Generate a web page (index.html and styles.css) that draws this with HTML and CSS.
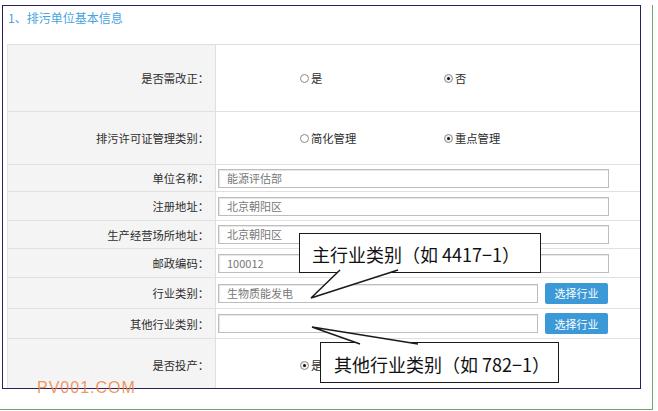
FILE: index.html
```html
<!DOCTYPE html>
<html lang="zh-CN">
<head>
    <meta charset="UTF-8">
    <meta name="viewport" content="width=device-width, initial-scale=1.0">
    <title>排污单位基本信息</title>
    <link rel="stylesheet" href="styles.css">
</head>
<body>
    <div class="page">
        <div class="panel">
            <div class="panel-title">1、排污单位基本信息</div>
            <div class="form-table">
                <div class="row row-1">
                    <div class="label">是否需改正：</div>
                    <div class="value radios">
                        <span class="opt"><span class="radio"></span>是</span>
                        <span class="opt"><span class="radio checked"></span>否</span>
                    </div>
                </div>
                <div class="row row-2">
                    <div class="label">排污许可证管理类别：</div>
                    <div class="value radios">
                        <span class="opt"><span class="radio"></span>简化管理</span>
                        <span class="opt"><span class="radio checked"></span>重点管理</span>
                    </div>
                </div>
                <div class="row row-3">
                    <div class="label">单位名称：</div>
                    <div class="value"><div class="field">能源评估部</div></div>
                </div>
                <div class="row row-4">
                    <div class="label">注册地址：</div>
                    <div class="value"><div class="field">北京朝阳区</div></div>
                </div>
                <div class="row row-5">
                    <div class="label">生产经营场所地址：</div>
                    <div class="value"><div class="field">北京朝阳区</div></div>
                </div>
                <div class="row row-6">
                    <div class="label">邮政编码：</div>
                    <div class="value"><div class="field">100012</div></div>
                </div>
                <div class="row row-7">
                    <div class="label">行业类别：</div>
                    <div class="value">
                        <div class="field field-short">生物质能发电</div>
                        <button class="pick-btn">选择行业</button>
                    </div>
                </div>
                <div class="row row-8">
                    <div class="label">其他行业类别：</div>
                    <div class="value">
                        <div class="field field-short"></div>
                        <button class="pick-btn">选择行业</button>
                    </div>
                </div>
                <div class="row row-9">
                    <div class="label">是否投产：</div>
                    <div class="value radios">
                        <span class="opt"><span class="radio checked"></span>是</span>
                    </div>
                </div>
            </div>
        </div>

        <!-- annotation callouts drawn over the form -->
        <div class="callout callout-main">主行业类别（如 4417−1）</div>
        <div class="callout callout-other">其他行业类别（如 782−1）</div>
        <svg class="tails" width="658" height="411" viewBox="0 0 658 411">
            <polyline points="340,265 311,293 398,265" />
            <polyline points="360,339 312,322 418,339" />
        </svg>
        <div class="watermark">PV001.COM</div>
    </div>
</body>
</html>
```

FILE: styles.css
```css
body {
    margin: 0;
    padding: 0;
    background-color: #fff;
    font-family: "Noto Sans CJK SC", "Liberation Sans", sans-serif;
}

.page {
    position: relative;
    width: 653px;
    height: 405px;
    box-sizing: border-box;
    border-right: 1px solid #6aa871;
    border-bottom: 1px solid #6aa871;
}

.panel {
    margin: 5px 0 0 2px;
    width: 639px;
    height: 384px;
    box-sizing: border-box;
    border: 1px solid #27215f;
    overflow: hidden;
}

.panel-title {
    height: 38px;
    box-sizing: border-box;
    padding: 5px 0 0 5px;
    font-size: 12px;
    line-height: 13px;
    color: #46a4df;
}

.form-table {
    margin-left: 4px;
    border-top: 1px solid #dedede;
    border-left: 1px solid #e4e4e4;
}

.row {
    display: flex;
    box-sizing: border-box;
    border-bottom: 1px solid #e0e0e0;
}

.row-1 { height: 67px; }
.row-2 { height: 53px; }
.row-3 { height: 27px; }
.row-4 { height: 29px; }
.row-5 { height: 28px; }
.row-6 { height: 29px; }
.row-7 { height: 31px; }
.row-8 { height: 30px; }
.row-9 { height: 53px; }

.label {
    width: 208px;
    box-sizing: border-box;
    padding-right: 6px;
    background-color: #f4f4f4;
    border-right: 1px solid #e0e0e0;
    display: flex;
    align-items: center;
    justify-content: flex-end;
    font-size: 11.3px;
    color: #2e2e2e;
}

.value {
    flex: 1;
    display: flex;
    align-items: center;
    padding-left: 2px;
}

.radios {
    padding-left: 84px;
    font-size: 11.3px;
    color: #2e2e2e;
}

.opt {
    width: 144px;
    display: flex;
    align-items: center;
}

.radio {
    width: 9px;
    height: 9px;
    box-sizing: border-box;
    border: 1px solid #8a8a8a;
    border-radius: 50%;
    margin-right: 2px;
    background-color: #fff;
    position: relative;
}

.radio.checked {
    background-color: #eee;
}

.radio.checked::after {
    content: "";
    position: absolute;
    left: 2px;
    top: 2px;
    width: 3px;
    height: 3px;
    border-radius: 50%;
    background-color: #111;
}

.field {
    width: 391px;
    height: 19px;
    box-sizing: border-box;
    border: 1px solid #bdbdbd;
    box-shadow: inset 1px 1px 1px #e6e6e6;
    padding-left: 8px;
    font-size: 11px;
    line-height: 17px;
    color: #777;
}

.field-short {
    width: 320px;
}

.pick-btn {
    margin-left: 7px;
    width: 63px;
    height: 21px;
    padding: 0;
    border: none;
    border-radius: 2px;
    background-color: #3b99d8;
    color: #fff;
    font-family: "Noto Sans CJK SC", sans-serif;
    font-size: 11px;
}

.callout {
    position: absolute;
    box-sizing: border-box;
    border: 1.5px solid #1a1a1a;
    background-color: #fff;
    font-size: 18px;
    color: #111;
    display: flex;
    align-items: center;
    text-spacing-trim: space-all;
}

.callout-main {
    left: 299px;
    top: 228px;
    width: 242px;
    height: 40px;
    padding: 2px 0 0 12px;
}

.callout-other {
    left: 320px;
    top: 337px;
    width: 239px;
    height: 41px;
    padding: 2px 0 0 13px;
}

.tails {
    position: absolute;
    left: 0;
    top: 0;
}

.tails polyline {
    fill: #fff;
    stroke: #1a1a1a;
    stroke-width: 1.5;
}

.watermark {
    position: absolute;
    left: 37px;
    top: 374px;
    font-family: "Liberation Sans", sans-serif;
    font-size: 16px;
    letter-spacing: 1px;
    color: rgba(240, 130, 70, 0.85);
}
```
